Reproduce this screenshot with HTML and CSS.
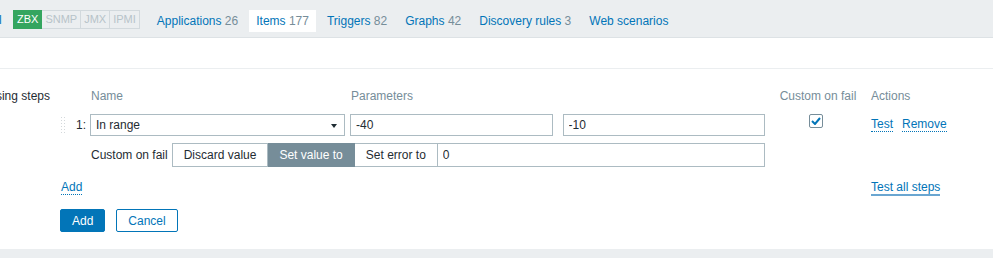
FILE: index.html
```html
<!DOCTYPE html>
<html lang="en">
<head>
    <meta charset="UTF-8">
    <title>Item preprocessing</title>
    <link rel="stylesheet" href="styles.css">
</head>
<body>
    <div class="tabs-bar">
        <span class="crumb">l</span>
        <div class="badges">
            <span class="badge badge-on">ZBX</span>
            <span class="badge">SNMP</span>
            <span class="badge">JMX</span>
            <span class="badge">IPMI</span>
        </div>
        <div class="tabs">
            <a class="tab">Applications <span class="count">26</span></a>
            <a class="tab tab-active">Items <span class="count">177</span></a>
            <a class="tab">Triggers <span class="count">82</span></a>
            <a class="tab">Graphs <span class="count">42</span></a>
            <a class="tab">Discovery rules <span class="count">3</span></a>
            <a class="tab">Web scenarios</a>
        </div>
    </div>

    <div class="main">
        <div class="prev-row"></div>

        <div class="form-row">
            <div class="form-label"><span>Preprocessing steps</span></div>
            <div class="steps">
                <div class="step-row step-head">
                    <div></div>
                    <div class="head-name">Name</div>
                    <div class="head-params">Parameters</div>
                    <div class="head-center">Custom on fail</div>
                    <div>Actions</div>
                </div>

                <div class="step-row step-main">
                    <div class="step-num">
                        <span class="drag"></span>
                        <span>1:</span>
                    </div>
                    <div class="select">In range<span class="select-arrow"></span></div>
                    <div class="params">
                        <input class="text-input" type="text" value="-40">
                        <input class="text-input" type="text" value="-10">
                    </div>
                    <div class="head-center">
                        <span class="checkbox">
                            <svg width="10" height="8" viewBox="0 0 10 8"><polyline points="1,4 4,7 9,1" fill="none" stroke="#0275b8" stroke-width="2"/></svg>
                        </span>
                    </div>
                    <div class="actions">
                        <a class="link">Test</a>
                        <a class="link">Remove</a>
                    </div>
                </div>

                <div class="step-row step-fail">
                    <div></div>
                    <div class="fail-line">
                        <span class="fail-label">Custom on fail</span>
                        <div class="segmented">
                            <span class="seg">Discard value</span>
                            <span class="seg seg-active">Set value to</span>
                            <span class="seg">Set error to</span>
                        </div>
                        <input class="text-input fail-input" type="text" value="0">
                    </div>
                </div>

                <div class="step-row step-foot">
                    <div class="add-cell"><a class="link">Add</a></div>
                    <div><a class="link link-solid">Test all steps</a></div>
                </div>
            </div>
        </div>

        <div class="form-buttons">
            <button class="btn btn-primary">Add</button>
            <button class="btn btn-alt">Cancel</button>
        </div>
    </div>

    <div class="footer"></div>
</body>
</html>
```

FILE: styles.css
```css
body {
    margin: 0;
    font-family: "Liberation Sans", Arial, sans-serif;
    font-size: 12px;
    color: #1f2c33;
    background-color: #ebeef0;
}
a {
    color: #0275b8;
    text-decoration: none;
}

/* top tabs */
.tabs-bar {
    height: 38px;
    border-bottom: 1px solid #dde2e5;
    display: flex;
    align-items: flex-start;
    padding-top: 10px;
    box-sizing: border-box;
    white-space: nowrap;
}
.crumb {
    color: #0275b8;
    margin-left: -1px;
    line-height: 20px;
    width: 14px;
}
.badges {
    display: flex;
    margin-right: 10px;
}
.badge {
    font-size: 11px;
    line-height: 17px;
    padding: 0 3px;
    color: #b7c3c9;
    border: 1px solid #d2d9dd;
    border-left: none;
}
.badge-on {
    background-color: #34a55f;
    border-color: #34a55f;
    color: #fff;
    padding: 0 3px 0 4px;
}
.tabs {
    display: flex;
    gap: 4px;
}
.tab {
    padding: 0 7px;
    line-height: 22px;
}
.tab .count {
    color: #768d99;
}
.tab-active {
    background-color: #fff;
}

/* main form */
.main {
    background-color: #fff;
}
.prev-row {
    height: 30px;
    border-bottom: 1px solid #ebeef0;
}
.form-row {
    display: flex;
    gap: 10px;
    padding-top: 20px;
}
.form-label {
    width: 50px;
    display: flex;
    justify-content: flex-end;
    white-space: nowrap;
    line-height: 14px;
}
.steps {
    flex: 1;
}
.step-row {
    display: grid;
    grid-template-columns: 30px 260px 415px 106px 1fr;
    align-items: center;
    white-space: nowrap;
}
.step-head {
    color: #768d99;
    line-height: 14px;
}
.head-name {
    padding-left: 1px;
}
.head-params {
    padding-left: 1px;
}
.head-center {
    text-align: center;
    display: flex;
    justify-content: center;
}
.step-main {
    margin-top: 11px;
    height: 22px;
}
.step-num {
    display: flex;
    align-items: center;
    gap: 9px;
}
.drag {
    width: 7px;
    height: 18px;
    background-image: radial-gradient(circle, #d3d8db 0.9px, transparent 1px);
    background-size: 3px 3px;
}
.select {
    position: relative;
    width: 255px;
    height: 22px;
    box-sizing: border-box;
    border: 1px solid #acbbc2;
    padding-left: 5px;
    line-height: 20px;
}
.select-arrow {
    position: absolute;
    right: 7px;
    top: 9px;
    border-left: 3px solid transparent;
    border-right: 3px solid transparent;
    border-top: 4px solid #1f2c33;
}
.params {
    display: flex;
    gap: 10px;
}
.text-input {
    width: 203px;
    height: 22px;
    box-sizing: border-box;
    border: 1px solid #acbbc2;
    padding: 0 5px;
    font-family: inherit;
    font-size: 12px;
    color: #1f2c33;
    margin: 0;
}
.checkbox {
    width: 14px;
    height: 14px;
    box-sizing: border-box;
    border: 1px solid #768d99;
    border-radius: 2px;
    display: flex;
    align-items: center;
    justify-content: center;
    margin: -8px 4px 0 0;
}
.actions {
    display: flex;
    gap: 9px;
}
.link {
    border-bottom: 1px dotted #0275b8;
    line-height: 13px;
}
.link-solid {
    border-bottom: 2px solid #6aa6d1;
}

.step-fail {
    margin-top: 7px;
    height: 24px;
}
.fail-line {
    grid-column: 2 / 4;
    display: flex;
    align-items: center;
}
.fail-label {
    padding-left: 1px;
    margin-right: 4px;
    flex-shrink: 0;
}
.segmented {
    display: flex;
    flex-shrink: 0;
}
.seg {
    height: 24px;
    line-height: 22px;
    box-sizing: border-box;
    padding: 0 11px;
    border: 1px solid #acbbc2;
    border-left: none;
}
.seg:first-child {
    border-left: 1px solid #acbbc2;
}
.seg-active {
    background-color: #768d99;
    border-color: #768d99;
    color: #fff;
}
.fail-input {
    flex: 1;
    min-width: 0;
    height: 24px;
    border-left: none;
}

.step-foot {
    margin-top: 13px;
}
.add-cell {
    grid-column: 1 / 5;
    padding-left: 1px;
}

.form-buttons {
    display: flex;
    gap: 11px;
    padding: 15px 0 17px 60px;
}
.btn {
    height: 23px;
    font-family: inherit;
    font-size: 12px;
    border-radius: 2px;
    padding: 0 11px;
    cursor: pointer;
}
.btn-primary {
    background-color: #0275b8;
    border: 1px solid #0275b8;
    color: #fff;
}
.btn-alt {
    background-color: #fff;
    border: 1px solid #0275b8;
    color: #0275b8;
}
.footer {
    height: 20px;
}
```
